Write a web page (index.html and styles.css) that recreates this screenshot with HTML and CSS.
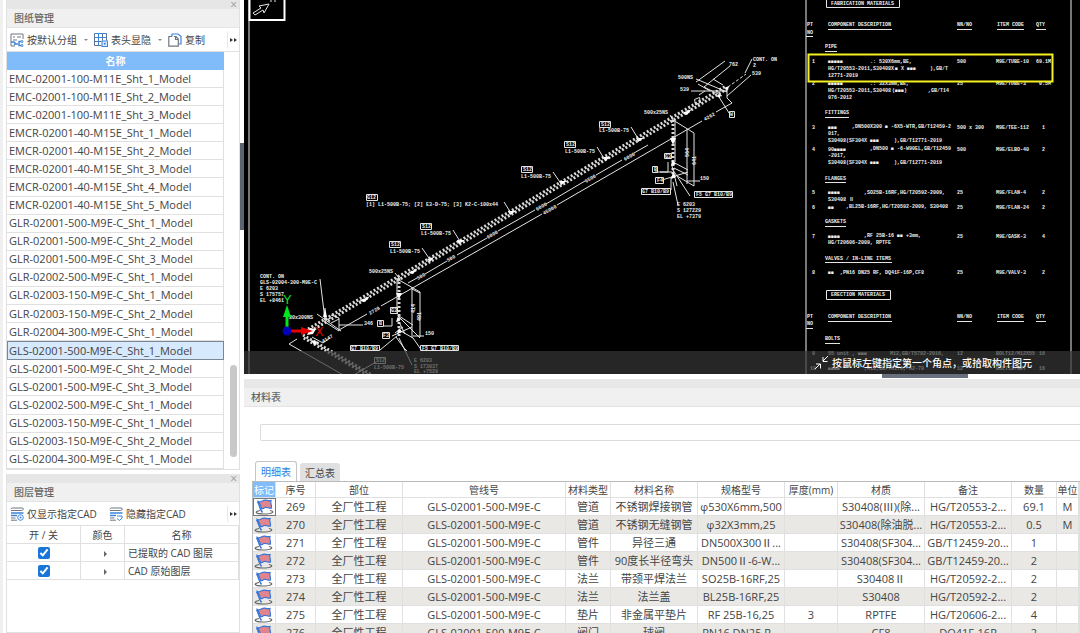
FILE: index.html
```html
<!DOCTYPE html>
<html lang="zh-CN">
<head>
    <meta charset="UTF-8">
    <meta name="viewport" content="width=device-width, initial-scale=1.0">
    <title>图纸管理</title>
    <link rel="stylesheet" href="styles.css">
</head>
<body>

<svg class="symbols" aria-hidden="true">
    <symbol id="flag" viewBox="0 0 20 16">
        <path d="M5 11.500C-1 12.500 0 15 9 15S20 12.500 15 11.500" fill="none" stroke="#666" stroke-width="1.200"/>
        <path d="M3.500 2.500C6 4 8 .5 11 1.200S14 2 16 1.500C15 4 17 6 16.500 9C14 10 12 7.500 10 8.500S8 10 6.500 9.500C6.500 7 4.500 5 3.500 2.500Z" fill="#e2848c" stroke="#3a76d8" stroke-width="1.200"/>
        <path d="M2.500 2.500C5 6 4.500 10 7.500 13.500" stroke="#3a76d8" stroke-width="1.600" fill="none"/>
    </symbol>
    <symbol id="layers" viewBox="0 0 14 14">
        <path d="M2.500 1h9.500q1.500 0 1.500 1.500M1 3.500h10.500q1.500 0 1.500-1M2.500 1Q1 1 1 2.200" fill="none" stroke="#6f7682"/>
        <path d="M1 6h12.500M1 8.500h6" fill="none" stroke="#3b84dc" stroke-width="1.3"/>
        <path d="M1 11h4.500M1 13.200h6" fill="none" stroke="#6f7682"/>
    </symbol>
</svg>

<div class="app">
    <div class="dock">
        <section class="panel drawings">
            <div class="panel-grip"><button class="close" aria-label="关闭">×</button></div>
            <h2>图纸管理</h2>
            <div class="toolbar">
                <button class="tool">
                    <svg width="14" height="14" viewBox="0 0 14 14" fill="none"><path d="M5 13H1V1h12v5M3 4h2M7 4h4M3 7h4" stroke="#6f7682"/><path d="M1 9h3l2 2h2M4 12l2-2M11 8.500H9v4h2" stroke="#3b84dc" stroke-width="1.4"/><circle cx="12" cy="8.500" r="1" stroke="#3b84dc"/><circle cx="12" cy="12.500" r="1" stroke="#3b84dc"/></svg>
                    按默认分组<span class="caret"></span>
                </button>
                <button class="tool">
                    <svg width="14" height="14" viewBox="0 0 14 14" fill="none"><path d="M.5.5h12v4H.5zM4.500.5v12M8.500.5v7M.5 8.500h7M.5 4.500v8h7M12.500 4.500v3" stroke="#5c6f8c"/><path d="M.5.500h12M.5 4.500h12M4.500.5v12" stroke="#3b84dc"/><rect x="8" y="8" width="5.500" height="5.500" fill="#d8eaff" stroke="#3b84dc"/><circle cx="10.800" cy="10.800" r="1" fill="#3b84dc"/></svg>
                    表头显隐<span class="caret"></span>
                </button>
                <button class="tool">
                    <svg width="14" height="14" viewBox="0 0 14 14" fill="none"><path d="M4 3.500V1h6l3 2.500V11h-2" stroke="#3b84dc" stroke-width="1.2"/><path d="M4 3.500H.8v9.700h9.500V6L8 3.500H6M7.500 4v2.500h3" stroke="#6f7682" stroke-width="1.200"/></svg>
                    复制
                </button>
                <button class="more" aria-label="更多"><span></span><span></span></button>
            </div>
            <div class="list">
                <table class="names">
                    <thead><tr><th>名称</th></tr></thead>
                    <tbody>
                        <tr><td>EMC-02001-100-M11E_Sht_1_Model</td></tr>
                        <tr><td>EMC-02001-100-M11E_Sht_2_Model</td></tr>
                        <tr><td>EMC-02001-100-M11E_Sht_3_Model</td></tr>
                        <tr><td>EMCR-02001-40-M15E_Sht_1_Model</td></tr>
                        <tr><td>EMCR-02001-40-M15E_Sht_2_Model</td></tr>
                        <tr><td>EMCR-02001-40-M15E_Sht_3_Model</td></tr>
                        <tr><td>EMCR-02001-40-M15E_Sht_4_Model</td></tr>
                        <tr><td>EMCR-02001-40-M15E_Sht_5_Model</td></tr>
                        <tr><td>GLR-02001-500-M9E-C_Sht_1_Model</td></tr>
                        <tr><td>GLR-02001-500-M9E-C_Sht_2_Model</td></tr>
                        <tr><td>GLR-02001-500-M9E-C_Sht_3_Model</td></tr>
                        <tr><td>GLR-02002-500-M9E-C_Sht_1_Model</td></tr>
                        <tr><td>GLR-02003-150-M9E-C_Sht_1_Model</td></tr>
                        <tr><td>GLR-02003-150-M9E-C_Sht_2_Model</td></tr>
                        <tr><td>GLR-02004-300-M9E-C_Sht_1_Model</td></tr>
                        <tr class="selected"><td>GLS-02001-500-M9E-C_Sht_1_Model</td></tr>
                        <tr><td>GLS-02001-500-M9E-C_Sht_2_Model</td></tr>
                        <tr><td>GLS-02001-500-M9E-C_Sht_3_Model</td></tr>
                        <tr><td>GLS-02002-500-M9E-C_Sht_1_Model</td></tr>
                        <tr><td>GLS-02003-150-M9E-C_Sht_1_Model</td></tr>
                        <tr><td>GLS-02003-150-M9E-C_Sht_2_Model</td></tr>
                        <tr><td>GLS-02004-300-M9E-C_Sht_1_Model</td></tr>
                    </tbody>
                </table>
                <div class="scrollbar"><div class="thumb"></div></div>
            </div>
        </section>

        <section class="panel layers">
            <div class="panel-grip"><button class="close" aria-label="关闭">×</button></div>
            <h2>图层管理</h2>
            <div class="toolbar">
                <button class="tool">
                    <svg width="14" height="14"><use href="#layers"/><circle cx="10.500" cy="10.500" r="2.800" fill="#fff" stroke="#3b84dc"/><circle cx="10.500" cy="10.500" r="1" fill="#3b84dc"/></svg>
                    仅显示指定CAD
                </button>
                <button class="tool">
                    <svg width="14" height="14"><use href="#layers"/><path d="M8 9h5v2l-2.500 2.500L8 11.500" fill="none" stroke="#3b84dc"/></svg>
                    隐藏指定CAD
                </button>
                <button class="more" aria-label="更多"><span></span><span></span></button>
            </div>
            <table class="layer-table">
                <thead><tr><th class="c-on">开 / 关</th><th class="c-color">颜色</th><th>名称</th></tr></thead>
                <tbody>
                    <tr><td><input type="checkbox" id="layer1" checked></td><td><span class="arrow"></span></td><td class="name"><label for="layer1">已提取的 CAD 图层</label></td></tr>
                    <tr><td><input type="checkbox" id="layer2" checked></td><td><span class="arrow"></span></td><td class="name"><label for="layer2">CAD 原始图层</label></td></tr>
                </tbody>
            </table>
        </section>
        <div class="dock-handle"></div>
    </div>

    <main class="work">
        <div class="canvas">
            <svg class="drawing" viewBox="244 0 836 374" preserveAspectRatio="xMinYMin slice">
                <!-- sheet frame and north arrow -->
                <g class="frame">
                    <path d="M249 0V374M806 0V374M1071 0V374"/>
                </g>
                <path class="ln heavy" d="M249.500 0V20H284.500V0"/>
                <path class="ln" d="M253 13L261 8L259 6L269 4L264 13L263 10L255 15ZM271 0v2M275 0v2"/>

                <!-- main pipe run, insulation drawn as two staggered edges -->
                <path class="insul" d="M308 329L726 86"/>
                <path class="insul shift" d="M309 332L727 89"/>
                <path class="insul" d="M303 335L372 375"/>
                <path class="insul shift" d="M302 337L371 377"/>
                <path class="ln" d="M289 344L297 339M289 344L345 376M352 376L376 362"/>
                <path class="ln" d="M339 330L367 314M381 306L542 214M557 205L702 121M716 112L732 103"/>
                <path class="ln" d="M408 283L417 278M425 274L447 261M457 255L487 238M498 231L535 210M546 204L585 181M596 175L622 160M634 153L648 145"/>
                <path class="solid" d="M418 268l-5 6l-5-1zM370 296l-5 6l-6-1zM692 109l-5 6l-5-2zM434 257l-4 5l-3-3zM516 211l-6 4l-2-4zM567 181l-6 4l-2-4zM611 157l-6 4l-2-4zM644 138l-6 4l-2-4zM465 240l-6 4l-2-4z"/>
                <path class="ln" d="M422 248L431 261M453 230L461 243M504 202L511 213M553 172L562 185M597 147L605 160M631 127L639 140M395 273L399 278M670 115L673 120"/>

                <!-- lower left branch -->
                <path class="ln" d="M320 279L325 320L331 318M325 308v14l14 9M331 315l8 3v13M331 323l8-4M317 314l24 17M339 325H363M312 337L323 343L330 338M297 331l15-2"/>
                <path class="solid" d="M325 308l2 9h-4zM310 328l6 1l-3 5l-6 1zM311 340l8 2l-5 3z"/>
                <path class="insul" d="M399 278V337"/>
                <path class="ln" d="M397 278V314M399 280L420 292V337M412 287V338M412 289l8 4M392 318v8h-8M399 316L413 325M398 316L420 338M399 330L413 338M395 333l8-6M413 336H424M407 351l-3-3l-8-11M399 338L412 365M413 338L422 351M380 350l17-14M399 322l6 12M392 336l20-9"/>
                <path class="solid" d="M399 299l-3-6h6zM398 316l2 5l-4 1zM399 328l3 4l-5 2z"/>

                <!-- upper right branch -->
                <path class="insul" d="M673 120V178"/>
                <path class="ln" d="M675 122V162M673 120L694 133V186M687 129V184M673 162L688 170M674 168L688 175M673 170L690 196M687 181H700M660 172H668V162M655 172H672M662 180L688 172M677 176L694 186M673 182L678 205M671 190v-12M672 166l5 20"/>
                <path class="solid" d="M673 145l-3-7h6zM672 160l4 4l-5 2zM673 172l3 5l-5 2z"/>

                <!-- pipe end -->
                <path class="ln" d="M696 82L725 61M704 87L730 66M696 79L727 92M698 84L710 91M704 87L722 96M691 91H727M713 79L723 85M727 87V98L732 103M727 96L751 75M719 97L729 113M745 73L752 59M699 95l6-4"/>
                <path class="ln dash" d="M728 87L746 74"/>
                <path class="solid" d="M729 86l-1 4l-4-2zM721 94l-1 4l-4-2z"/>

                <g class="ln">
                    <path d="M366.500 194.500h11v6h-11zM420.500 223.500h11v6h-11zM389.500 241.500h11v6h-11zM521.500 166.500h11v6h-11zM564.500 141.500h11v6h-11zM599.500 121.500h11v6h-11z"/>
                    <path d="M390.500 307.500h7v6h-7zM377.500 320.500h6v6h-6zM382.500 332.500h7v6h-7zM350.500 345.500h29v5h-29zM420.500 345.500h38v5h-38zM374.500 357.500h11v6h-11z"/>
                    <path d="M664.500 153.500h7v5h-7zM652.500 166.500h5v6h-5zM655.500 177.500h8v6h-8zM641.500 188.500h29v6h-29zM694.500 191.500h38v6h-38zM729.500 111.500h5v6h-5zM694.500 99.500l5-2l1 5l-5 2z"/>
                </g>
                <g class="cad">
                    <text x="367" y="199">G12</text><text x="366" y="206">[1] L1-500B-75; [2] E3-D-75; [3] K2-C-100x44</text>
                    <text x="422" y="228">S12</text><text x="421" y="235">L1-500B-75</text>
                    <text x="391" y="246">S12</text><text x="390" y="253">L1-500B-75</text>
                    <text x="523" y="171">S12</text><text x="521" y="178">L1-500B-75</text>
                    <text x="566" y="146">S12</text><text x="565" y="153">L1-500B-75</text>
                    <text x="601" y="126">S12</text><text x="599" y="132">L1-500B-75</text>
                    <text x="369" y="273">500x25NS</text><text x="644" y="114">500x25NS</text>
                    <text x="260" y="278">CONT. ON</text><text x="260" y="284">GLS-02004-300-M9E-C</text><text x="260" y="290">E 6203</text><text x="260" y="296">S 175757</text><text x="260" y="302">EL +8461</text>
                    <text x="289" y="319">80x300NS</text><text x="364" y="325">346</text><text x="425" y="335">150</text>
                    <text x="351" y="350">G7 B10/B9</text><text x="422" y="350">F5 G7 B10/B9</text>
                    <text x="376" y="362">S12</text><text x="374" y="369">L1-500B-75</text>
                    <text x="414" y="362">E 6203</text><text x="414" y="368">S 173037</text><text x="414" y="373">EL +7529</text>
                    <text x="391" y="312">G3</text><text x="379" y="325">B</text><text x="383" y="337">F3</text>
                    <text x="678" y="79">500NS</text><text x="680" y="91">539</text><text x="729" y="66">762</text>
                    <text x="753" y="61">CONT. ON</text><text x="753" y="67">2</text><text x="752" y="75">539</text>
                    <text x="665" y="158">G3</text><text x="654" y="171">B</text><text x="657" y="182">F4</text><text x="730" y="116">W</text>
                    <text x="642" y="193">G7 B10/B9</text><text x="696" y="196">F5 G7 B10/B9</text><text x="700" y="180">150</text>
                    <text x="677" y="206">E 6203</text><text x="677" y="212">S 127229</text><text x="677" y="218">EL +7379</text>
                    <text transform="translate(370 315) rotate(-30)">2728</text><text transform="translate(544 215) rotate(-30)">45000</text>
                    <text transform="translate(705 121) rotate(-30)">4262</text><text transform="translate(418 280) rotate(-30)">500</text>
                    <text transform="translate(448 262) rotate(-30)">500</text><text transform="translate(488 239) rotate(-30)">6000</text>
                    <text transform="translate(537 211) rotate(-30)">6000</text><text transform="translate(586 183) rotate(-30)">6500</text>
                    <text transform="translate(625 161) rotate(-30)">6000</text><text transform="translate(323 343) rotate(-30)">4147</text>
                    <text transform="translate(415 313) rotate(-90)">414</text><text transform="translate(421 321) rotate(-90)">491</text>
                    <text transform="translate(689 157) rotate(-90)">564</text><text transform="translate(696 165) rotate(-90)">641</text>
                </g>

                <!-- bill of materials -->
                <g class="cad">
                    <text x="831" y="5">FABRICATION MATERIALS</text>
                    <text x="807" y="26">PT</text><text x="807" y="34">NO</text><text x="828" y="26">COMPONENT DESCRIPTION</text><text x="957" y="26">NN/NO</text><text x="997" y="26">ITEM CODE</text><text x="1036" y="26">QTY</text>
                    <text x="825" y="48">PIPE</text>
                    <text x="812" y="63">1</text><text x="828" y="63">■■■■■</text><text x="870" y="63">.: 530X6mm,BE,</text><text x="957" y="63">500</text><text x="996" y="63">M9E/TUBE-10</text><text x="1036" y="63">69.1M</text>
                    <text x="828" y="70">HG/T20553-2011,S30408X</text><text x="895" y="70">■ X ■■■</text><text x="930" y="70">),GB/T</text>
                    <text x="828" y="77">12771-2019</text>
                    <text x="812" y="85">2</text><text x="828" y="85">■■■■■</text><text x="870" y="85">.: 32X3mm,BE,</text><text x="957" y="85">25</text><text x="996" y="85">M9E/TUBE-3</text><text x="1039" y="85">0.5M</text>
                    <text x="828" y="92">HG/T20553-2011,S30408</text><text x="892" y="92">(■■■)</text><text x="928" y="92">,GB/T14</text>
                    <text x="828" y="99">976-2012</text>
                    <text x="825" y="114">FITTINGS</text>
                    <text x="812" y="129">3</text><text x="828" y="129">■■■</text><text x="852" y="128">,DN500X300 ■ -6X5-WTR,GB/T12459-2</text><text x="957" y="129">500 x 300</text><text x="996" y="129">M9E/TEE-112</text><text x="1042" y="129">1</text>
                    <text x="828" y="135">017,</text>
                    <text x="828" y="142">S30408(SF304X</text><text x="870" y="142">■■■</text><text x="894" y="142">),GB/T12771-2019</text>
                    <text x="812" y="151">4</text><text x="828" y="151">90■■■■</text><text x="870" y="150">,DN500 ■ -6-W90EL,GB/T12459</text><text x="957" y="151">500</text><text x="996" y="151">M9E/ELBO-40</text><text x="1042" y="151">2</text>
                    <text x="828" y="157">-2017,</text>
                    <text x="828" y="164">S30408(SF304X</text><text x="870" y="164">■■■</text><text x="894" y="164">),GB/T12771-2019</text>
                    <text x="825" y="180">FLANGES</text>
                    <text x="812" y="194">5</text><text x="828" y="194">■■■■</text><text x="864" y="194">,SO25B-16RF,HG/T20592-2009,</text><text x="957" y="194">25</text><text x="996" y="194">M9E/FLAN-4</text><text x="1042" y="194">2</text>
                    <text x="828" y="201">S30408 Ⅱ</text>
                    <text x="812" y="209">6</text><text x="828" y="209">■■</text><text x="846" y="208">,BL25B-16RF,HG/T20592-2009, S30408</text><text x="957" y="209">25</text><text x="996" y="209">M9E/FLAN-24</text><text x="1042" y="209">2</text>
                    <text x="825" y="223">GASKETS</text>
                    <text x="812" y="238">7</text><text x="828" y="238">■■■■</text><text x="864" y="237">,RF 25B-16  ■■  +3mm,</text><text x="957" y="238">25</text><text x="996" y="238">M9E/GASK-3</text><text x="1042" y="238">4</text>
                    <text x="828" y="244">HG/T20606-2009, RPTFE</text>
                    <text x="825" y="260">VALVES / IN-LINE ITEMS</text>
                    <text x="812" y="274">8</text><text x="828" y="274">■■</text><text x="840" y="274">,PN16 DN25 RF, DQ41F-16P,CF8</text><text x="957" y="274">25</text><text x="996" y="274">M9E/VALV-3</text><text x="1042" y="274">2</text>
                    <text x="831" y="296">ERECTION MATERIALS</text>
                    <text x="807" y="318">PT</text><text x="807" y="325">NO</text><text x="828" y="318">COMPONENT DESCRIPTION</text><text x="957" y="318">NN/NO</text><text x="997" y="318">ITEM CODE</text><text x="1036" y="318">QTY</text>
                    <text x="825" y="340">BOLTS</text>
                    <text x="812" y="355">9</text><text x="828" y="355">55 unit ,  ■■■</text><text x="890" y="355">M12,GB/T5782-2016,</text><text x="957" y="355">12</text><text x="996" y="355">BOLT12/M12X55</text><text x="1039" y="355">16</text>
                    <text x="810" y="370">10</text><text x="828" y="370">■■■■</text><text x="864" y="370">,M12,GB/T6170, A2-70</text><text x="957" y="370">12</text><text x="996" y="370">BOLT12/NUT</text><text x="1039" y="370">16</text>
                </g>
                <path class="ln" d="M826.500 0V7.500H899.500V0M826.500 290.500h64v9h-64z"/>
                <path class="ln" d="M828 29.500H892M957 29.500h15M997 29.500h27M1036 29.500h10M806 36.500h7M825 51.500h12M825 117.500h24M825 182.500h21M825 226.500h21M825 262.500h67M828 321.500H892M957 321.500h15M997 321.500h27M1036 321.500h10M806 328.500h7M825 343.500h15"/>
                <rect class="pick" x="808.500" y="54.500" width="244" height="27"/>

                <!-- UCS icon -->
                <path d="M287 331V314" stroke="#00e61c" stroke-width="3"/>
                <path d="M287 305l4 12h-8z" fill="#00e61c"/>
                <path d="M287 331H304" stroke="#e60000" stroke-width="3"/>
                <path d="M313 331l-12 4v-8z" fill="#e60000"/>
                <circle cx="287" cy="331" r="4.500" fill="#0000b8"/>
                <text class="axis y" x="283" y="304">Y</text>
                <text class="axis x" x="315" y="336">X</text>
            </svg>
            <div class="prompt">
                <svg width="16" height="16" viewBox="0 0 16 16" fill="none" stroke="#fff"><path d="M14 1L9 6M9 2v4.500h4.500M1 14L6 9M2 9h4.500v4.500"/></svg>
                按鼠标左键指定第一个角点，或拾取构件图元
            </div>
        </div>
        <div class="splitter"><div class="splitter-handle"></div></div>

        <section class="materials">
            <h2>材料表</h2>
            <input class="filter" type="text" aria-label="筛选">
            <div class="tabs">
                <button class="tab active">明细表</button>
                <button class="tab">汇总表</button>
            </div>
            <div class="grid">
                <table class="detail">
                    <colgroup>
                        <col class="w-mark"><col class="w-no"><col class="w-spec"><col class="w-line"><col class="w-small"><col class="w-spec"><col class="w-spec"><col class="w-thick"><col class="w-spec"><col class="w-spec"><col class="w-small"><col class="w-unit"><col>
                    </colgroup>
                    <thead>
                        <tr><th class="marked">标记</th><th>序号</th><th>部位</th><th>管线号</th><th>材料类型</th><th>材料名称</th><th>规格型号</th><th>厚度(mm)</th><th>材质</th><th>备注</th><th>数量</th><th>单位</th><th></th></tr>
                    </thead>
                    <tbody>
                        <tr><td class="current"><svg class="flag"><use href="#flag"/></svg></td><td>269</td><td>全厂性工程</td><td>GLS-02001-500-M9E-C</td><td>管道</td><td>不锈钢焊接钢管</td><td>φ530X6mm,500</td><td></td><td>S30408(Ⅲ)(除...</td><td>HG/T20553-2...</td><td>69.1</td><td>M</td><td></td></tr>
                        <tr><td><svg class="flag"><use href="#flag"/></svg></td><td>270</td><td>全厂性工程</td><td>GLS-02001-500-M9E-C</td><td>管道</td><td>不锈钢无缝钢管</td><td>φ32X3mm,25</td><td></td><td>S30408(除油脱...</td><td>HG/T20553-2...</td><td>0.5</td><td>M</td><td></td></tr>
                        <tr><td><svg class="flag"><use href="#flag"/></svg></td><td>271</td><td>全厂性工程</td><td>GLS-02001-500-M9E-C</td><td>管件</td><td>异径三通</td><td>DN500X300Ⅱ...</td><td></td><td>S30408(SF304...</td><td>GB/T12459-20...</td><td>1</td><td></td><td></td></tr>
                        <tr><td><svg class="flag"><use href="#flag"/></svg></td><td>272</td><td>全厂性工程</td><td>GLS-02001-500-M9E-C</td><td>管件</td><td>90度长半径弯头</td><td>DN500Ⅱ-6-W...</td><td></td><td>S30408(SF304...</td><td>GB/T12459-20...</td><td>2</td><td></td><td></td></tr>
                        <tr><td><svg class="flag"><use href="#flag"/></svg></td><td>273</td><td>全厂性工程</td><td>GLS-02001-500-M9E-C</td><td>法兰</td><td>带颈平焊法兰</td><td>SO25B-16RF,25</td><td></td><td>S30408Ⅱ</td><td>HG/T20592-2...</td><td>2</td><td></td><td></td></tr>
                        <tr><td><svg class="flag"><use href="#flag"/></svg></td><td>274</td><td>全厂性工程</td><td>GLS-02001-500-M9E-C</td><td>法兰</td><td>法兰盖</td><td>BL25B-16RF,25</td><td></td><td>S30408</td><td>HG/T20592-2...</td><td>2</td><td></td><td></td></tr>
                        <tr><td><svg class="flag"><use href="#flag"/></svg></td><td>275</td><td>全厂性工程</td><td>GLS-02001-500-M9E-C</td><td>垫片</td><td>非金属平垫片</td><td>RF 25B-16,25</td><td>3</td><td>RPTFE</td><td>HG/T20606-2...</td><td>4</td><td></td><td></td></tr>
                        <tr><td><svg class="flag"><use href="#flag"/></svg></td><td>276</td><td>全厂性工程</td><td>GLS-02001-500-M9E-C</td><td>阀门</td><td>球阀</td><td>PN16 DN25 R...</td><td></td><td>CF8</td><td>DQ41F-16P</td><td>2</td><td></td><td></td></tr>
                    </tbody>
                </table>
            </div>
        </section>
    </main>
</div>

</body>
</html>
```

FILE: styles.css
```css
* {
    box-sizing: border-box;
}
body {
    margin: 0;
    font-family: "Open Sans", "Noto Sans CJK SC", sans-serif;
    font-size: 11px;
    color: #444;
    background-color: #fff;
}
button, input {
    font: inherit;
    color: inherit;
}
button {
    border: 0;
    padding: 0;
    background: none;
}
h2 {
    margin: 0;
    height: 19px;
    padding-left: 7px;
    font-size: 10px;
    line-height: 18px;
    font-weight: 500;
    color: #666;
    background-color: #f0f0f0;
    border-bottom: 1px solid #e4e4e4;
}
table {
    border-collapse: separate;
    border-spacing: 0;
}
th, td {
    padding: 0;
    font-weight: normal;
    line-height: 16px;
    white-space: nowrap;
}
.symbols {
    display: none;
}
.app {
    display: flex;
    height: 100vh;
    overflow: hidden;
}

/* left dock */
.dock {
    position: relative;
    flex: none;
    width: 244px;
    padding: 0 4px 0 3px;
    display: flex;
    flex-direction: column;
    gap: 4px;
    border-left: 3px solid #f0f0f0;
}
.panel {
    border: 1px solid #e0e0e0;
    border-top: 0;
}
.layers {
    flex: 1;
}
.panel-grip {
    display: flex;
    justify-content: flex-end;
    height: 9px;
    padding-right: 2px;
    background-color: #e6e6e6;
}
.close {
    font-size: 12px;
    line-height: 8px;
    color: #999;
}
.toolbar {
    display: flex;
    align-items: center;
    gap: 6px;
    height: 24px;
    padding-left: 3px;
    border-bottom: 1px solid #e0e0e0;
}
.layers .toolbar {
    gap: 12px;
}
.tool {
    display: flex;
    align-items: center;
    gap: 3px;
    font-size: 10px;
    white-space: nowrap;
}
.caret {
    margin-left: 4px;
    border: 2px solid transparent;
    border-top-color: #888;
    border-bottom: 0;
}
.more {
    display: flex;
    align-items: center;
    gap: 1px;
    height: 18px;
    margin-left: auto;
    padding: 0 2px;
    border-left: 1px solid #e8e8e8;
    border-radius: 3px;
}
.more span {
    border: 2px solid transparent;
    border-left: 3px solid #333;
    border-right: 0;
}
.list {
    display: flex;
    justify-content: space-between;
}
.names {
    width: 217px;
    height: 417px;
}
.names th {
    height: 18px;
    color: #fff;
    font-size: 10px;
    font-weight: bold;
    background-color: #80bbfa;
}
.names td {
    padding-left: 2px;
    border-right: 1px solid #e0e0e0;
    border-bottom: 1px solid #e0e0e0;
}
.names .selected td {
    padding-left: 1px;
    background-color: #d6e9fd;
    border: 1px solid #7b8794;
}
.scrollbar {
    width: 9px;
    padding-top: 313px;
}
.thumb {
    width: 7px;
    height: 92px;
    border-radius: 4px;
    background-color: #c8c8c8;
}
.layer-table {
    width: 100%;
    table-layout: fixed;
    font-size: 10px;
    text-align: center;
}
.layer-table th, .layer-table td {
    height: 18px;
    border-right: 1px solid #e0e0e0;
    border-bottom: 1px solid #e0e0e0;
}
.layer-table .c-on {
    width: 74px;
}
.layer-table .c-color {
    width: 44px;
}
.layer-table .name {
    padding-left: 3px;
    text-align: left;
}
.layer-table input {
    display: block;
    width: 12px;
    height: 12px;
    margin: 0 auto;
    accent-color: #1976d8;
}
.arrow {
    display: inline-block;
    margin-left: 6px;
    border: 3px solid transparent;
    border-left-color: #666;
    border-right: 0;
}
.dock-handle {
    position: absolute;
    right: 0;
    top: 143px;
    width: 4px;
    height: 87px;
    background-color: #5a6370;
}

/* drawing area */
.work {
    flex: 1;
    min-width: 0;
    display: flex;
    flex-direction: column;
}
.canvas {
    position: relative;
    flex: none;
    height: 374px;
    overflow: hidden;
    background-color: #000;
}
.drawing {
    display: block;
    width: 100%;
    height: 100%;
}
.frame {
    fill: none;
    stroke: #777;
    stroke-width: 2;
}
.ln {
    fill: none;
    stroke: #e4e4e4;
    stroke-width: 1;
}
.heavy {
    stroke: #fff;
    stroke-width: 2;
}
.dash {
    stroke-dasharray: 3 2;
}
.insul {
    fill: none;
    stroke: #d8d8d8;
    stroke-width: 3;
    stroke-dasharray: 2 2;
}
.shift {
    stroke-dashoffset: 2;
}
.solid {
    fill: #fff;
}
.cad {
    font-family: "Liberation Mono", monospace;
    font-size: 5px;
    font-weight: bold;
    fill: #f0f0f0;
    white-space: pre;
}
.pick {
    fill: none;
    stroke: #f5f01e;
    stroke-width: 2;
}
.axis {
    font-family: "Liberation Sans", sans-serif;
    font-size: 13px;
}
.axis.x {
    fill: #e60000;
}
.axis.y {
    fill: #00e61c;
}
.prompt {
    position: absolute;
    left: 0;
    right: 0;
    bottom: 0;
    display: flex;
    justify-content: flex-end;
    align-items: center;
    gap: 2px;
    height: 23px;
    padding-right: 48px;
    font-size: 10px;
    font-weight: 500;
    color: #fff;
    background-color: rgba(54, 54, 54, 0.7);
}
.splitter {
    flex: none;
    height: 14px;
    border-top: 5px solid #fff;
    background-color: #e8e8e8;
}
.splitter-handle {
    position: relative;
    top: -5px;
    width: 86px;
    height: 4px;
    margin-left: auto;
    margin-right: 112px;
    background-color: #687080;
}

/* material table */
.materials {
    flex: 1;
    min-height: 0;
    display: flex;
    flex-direction: column;
}
.materials h2, .materials .tabs {
    flex: none;
}
.filter {
    flex: none;
    height: 17px;
    margin: 17px 0 20px 16px;
    border: 1px solid #dcdcdc;
    border-right: 0;
    border-radius: 2px 0 0 2px;
}
.tabs {
    display: flex;
    align-items: flex-end;
    gap: 3px;
    padding-left: 11px;
}
.tab {
    height: 18px;
    padding: 0 5px;
    font-size: 10px;
    border-radius: 3px 3px 0 0;
    background-color: #e0e0e0;
}
.tab.active {
    height: 20px;
    color: #2a7de0;
    background-color: #fff;
    border: 1px solid #c4c4c4;
    border-bottom: 0;
}
.grid {
    margin-left: 8px;
    overflow: hidden;
    border-top: 1px solid #bbb;
    border-left: 1px solid #bbb;
}
.detail {
    width: 100%;
    min-width: 827px;
    table-layout: fixed;
    text-align: center;
}
.detail th {
    height: 16px;
    font-size: 10px;
    line-height: 14px;
    border-right: 1px solid #e0e0e0;
    border-bottom: 1px solid #e0e0e0;
}
.detail td {
    height: 18px;
    border-right: 1px solid #e0e0e0;
    border-bottom: 1px solid #e0e0e0;
}
.detail tr:nth-child(even) td {
    background-color: #e9e8e5;
}
.detail .marked {
    color: #fff;
    background-color: #80bbfa;
}
.detail .current {
    border: 1px solid #777;
}
.flag {
    display: block;
    width: 20px;
    height: 16px;
    margin: 0 auto;
}
.w-mark {
    width: 23px;
}
.w-no {
    width: 40px;
}
.w-spec {
    width: 87px;
}
.w-line {
    width: 163px;
}
.w-small {
    width: 45px;
}
.w-thick {
    width: 53px;
}
.w-unit {
    width: 22px;
}
```
